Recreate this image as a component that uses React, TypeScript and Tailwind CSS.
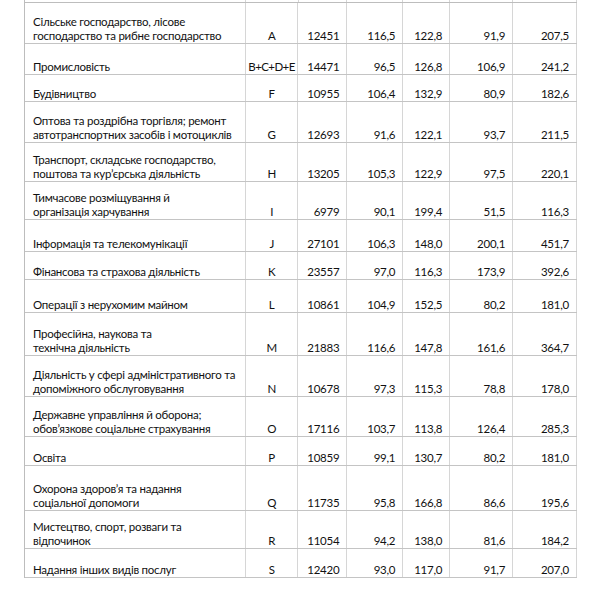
type Row = {
  name: string[];
  code: string;
  vals: string[];
  h: string;
};

const rows: Row[] = [
  { name: ["Сільське господарство, лісове", "господарство та рибне господарство"], code: "A", vals: ["12451", "116,5", "122,8", "91,9", "207,5"], h: "h-[41px]" },
  { name: ["Промисловість"], code: "B+C+D+E", vals: ["14471", "96,5", "126,8", "106,9", "241,2"], h: "h-[31px]" },
  { name: ["Будівництво"], code: "F", vals: ["10955", "106,4", "132,9", "80,9", "182,6"], h: "h-[27px]" },
  { name: ["Оптова та роздрібна торгівля; ремонт", "автотранспортних засобів і мотоциклів"], code: "G", vals: ["12693", "91,6", "122,1", "93,7", "211,5"], h: "h-[41px]" },
  { name: ["Транспорт, складське господарство,", "поштова та кур’єрська діяльність"], code: "H", vals: ["13205", "105,3", "122,9", "97,5", "220,1"], h: "h-[39px]" },
  { name: ["Тимчасове розміщування й", "організація харчування"], code: "I", vals: ["6979", "90,1", "199,4", "51,5", "116,3"], h: "h-[38px]" },
  { name: ["Інформація та телекомунікації"], code: "J", vals: ["27101", "106,3", "148,0", "200,1", "451,7"], h: "h-[32px]" },
  { name: ["Фінансова та страхова діяльність"], code: "K", vals: ["23557", "97,0", "116,3", "173,9", "392,6"], h: "h-[28px]" },
  { name: ["Операції з нерухомим майном"], code: "L", vals: ["10861", "104,9", "152,5", "80,2", "181,0"], h: "h-[33px]" },
  { name: ["Професійна, наукова та", "технічна діяльність"], code: "M", vals: ["21883", "116,6", "147,8", "161,6", "364,7"], h: "h-[43px]" },
  { name: ["Діяльність у сфері адміністративного та", "допоміжного обслуговування"], code: "N", vals: ["10678", "97,3", "115,3", "78,8", "178,0"], h: "h-[41px]" },
  { name: ["Державне управління й оборона;", "обов’язкове соціальне страхування"], code: "O", vals: ["17116", "103,7", "113,8", "126,4", "285,3"], h: "h-[40px]" },
  { name: ["Освіта"], code: "P", vals: ["10859", "99,1", "130,7", "80,2", "181,0"], h: "h-[29px]" },
  { name: ["Охорона здоров’я та надання", "соціальної допомоги"], code: "Q", vals: ["11735", "95,8", "166,8", "86,6", "195,6"], h: "h-[45px]" },
  { name: ["Мистецтво, спорт, розваги та", "відпочинок"], code: "R", vals: ["11054", "94,2", "138,0", "81,6", "184,2"], h: "h-[38px]" },
  { name: ["Надання інших видів послуг"], code: "S", vals: ["12420", "93,0", "117,0", "91,7", "207,0"], h: "h-[29px]" },
];

const valWidths = ["w-[49px]", "w-[56px]", "w-[47px]", "w-[63px]", "w-[64px]"];

export default function App() {
  return (
    <div className="w-[594px] h-[601px] bg-white overflow-hidden font-['Lato','Open_Sans',sans-serif] text-[11.5px] leading-[14px] tracking-[-0.25px] text-[#111]">
      <div className="ml-[24px] w-[553px] border-l border-[#bdbdbd]">
        <div className="flex h-[3px] border-b border-[#bdbdbd]">
          <div className="w-[221px] border-r border-[#d6d6d6]" />
          <div className="w-[53px] border-r border-[#d6d6d6]" />
          {valWidths.map((w, i) => (
            <div key={i} className={`${w} border-r border-[#d6d6d6]`} />
          ))}
        </div>
        {rows.map((r) => (
          <div key={r.code} className={`flex ${r.h} border-b border-[#c4c4c4]`}>
            <div className="w-[221px] pl-[8px] flex flex-col justify-end border-r border-[#d6d6d6] whitespace-nowrap">
              {r.name.map((line) => (
                <span key={line}>{line}</span>
              ))}
            </div>
            <div className="w-[53px] flex items-end justify-center border-r border-[#d6d6d6] whitespace-nowrap tracking-[-0.6px]">
              {r.code}
            </div>
            {r.vals.map((v, i) => (
              <div key={i} className={`${valWidths[i]} flex items-end justify-end pr-[7px] border-r border-[#d6d6d6]`}>
                {v}
              </div>
            ))}
          </div>
        ))}
      </div>
    </div>
  );
}
